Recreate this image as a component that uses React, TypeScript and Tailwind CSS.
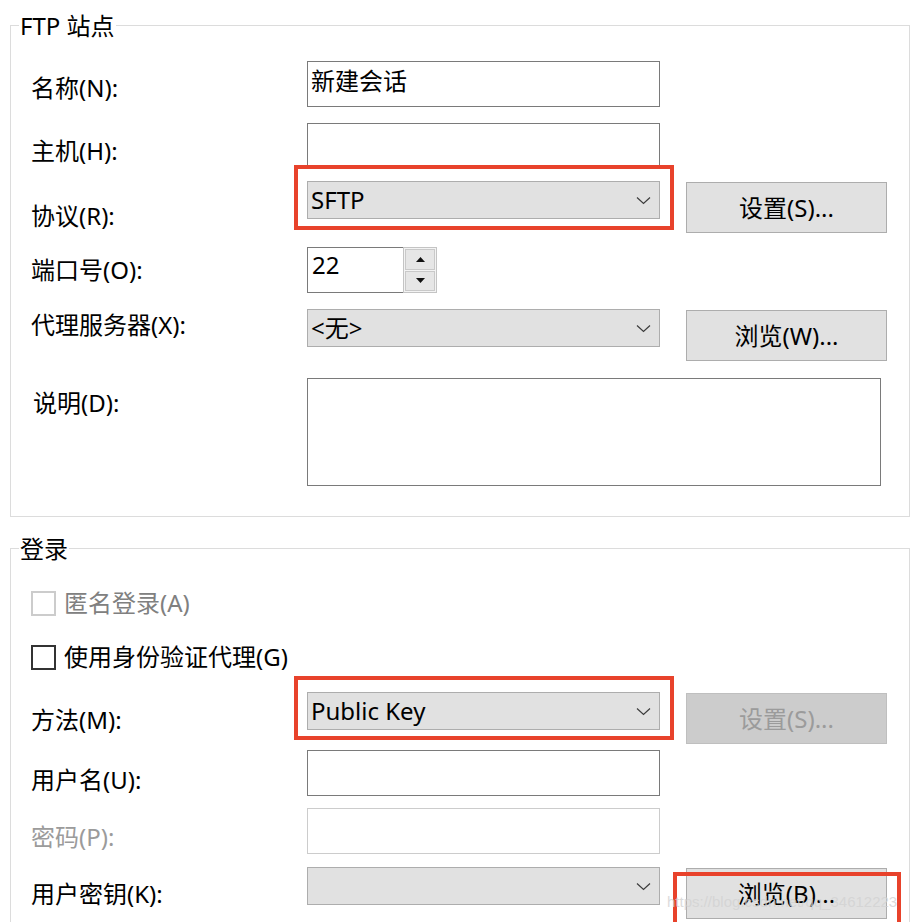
import React from 'react';

const LABEL_W = 'w-[276px]';

function Chevron() {
  return (
    <svg width="15" height="9" viewBox="0 0 15 9" className="shrink-0">
      <path d="M1 1.5 L7.5 7.5 L14 1.5" fill="none" stroke="#3c3c3c" strokeWidth="1.2" />
    </svg>
  );
}

function Select({ value }: { value?: string }) {
  return (
    <div className="w-[353px] h-[38px] shrink-0 bg-[#e1e1e1] border border-[#adadad] flex items-center justify-between pl-[3px] pr-[8px] leading-[28px]">
      <span>{value}</span>
      <Chevron />
    </div>
  );
}

function Button({ text, disabled }: { text: string; disabled?: boolean }) {
  return (
    <div
      className={`ml-[26px] mt-[1px] w-[201px] h-[51px] shrink-0 flex items-center justify-center leading-[28px] border ${
        disabled ? 'bg-[#cccccc] border-[#bfbfbf] text-[#9b9b9b]' : 'bg-[#e1e1e1] border-[#adadad]'
      }`}
    >
      {text}
    </div>
  );
}

function Input({ value, disabled }: { value?: string; disabled?: boolean }) {
  return (
    <div
      className={`w-[353px] h-[46px] shrink-0 bg-white border pl-[3px] pt-[5px] leading-[28px] ${
        disabled ? 'border-[#cccccc]' : 'border-[#7a7a7a]'
      }`}
    >
      {value}
    </div>
  );
}

function Label({ text, top, gray }: { text: string; top: string; gray?: boolean }) {
  return <div className={`${LABEL_W} shrink-0 leading-[28px] ${top} ${gray ? 'text-[#9b9b9b]' : ''}`}>{text}</div>;
}

function Spinner() {
  return (
    <div className="flex">
      <div className="w-[96px] h-[46px] border border-r-0 border-[#7a7a7a] pl-[4px] pt-[3px] leading-[28px]">22</div>
      <div className="w-[34px] h-[46px] border border-[#c4c4c4] bg-[#f3f3f3] flex flex-col gap-[1px] p-[1px]">
        <div className="flex-1 bg-[#e6e6e6] border border-[#c9c9c9] flex items-center justify-center">
          <svg width="9" height="5" viewBox="0 0 9 5"><path d="M0 5 L4.5 0 L9 5 Z" fill="#111" /></svg>
        </div>
        <div className="flex-1 bg-[#e6e6e6] border border-[#c9c9c9] flex items-center justify-center">
          <svg width="9" height="5" viewBox="0 0 9 5"><path d="M0 0 L9 0 L4.5 5 Z" fill="#111" /></svg>
        </div>
      </div>
    </div>
  );
}

function Checkbox({ text, disabled }: { text: string; disabled?: boolean }) {
  return (
    <div className={`flex items-center h-[28px] gap-[8px] ${disabled ? 'text-[#808080]' : ''}`}>
      <div className={`w-[25px] h-[25px] border-2 bg-white ${disabled ? 'border-[#cccccc]' : 'border-[#333333]'}`} />
      <span className="leading-[28px]">{text}</span>
    </div>
  );
}

function Legend({ text }: { text: string }) {
  return <div className="-mt-[14px] ml-[8px] px-[1px] w-fit h-[28px] leading-[28px] bg-white">{text}</div>;
}

export default function App() {
  return (
    <div className="relative w-[920px] h-[922px] overflow-hidden bg-white text-black text-[24px] font-['Noto_Sans','Noto_Sans_CJK_SC',sans-serif]">
      {/* FTP 站点 */}
      <div className="ml-[10px] mt-[25px] w-[900px] h-[492px] border border-[#dcdcdc]">
        <Legend text="FTP 站点" />
        <div className="pl-[20px] mt-[21px]">
          <div className="flex items-start h-[62px]">
            <Label text="名称(N):" top="mt-[13px]" />
            <Input value="新建会话" />
          </div>
          <div className="flex items-start h-[58px]">
            <Label text="主机(H):" top="mt-[14px]" />
            <Input />
          </div>
          <div className="flex items-start h-[66px]">
            <Label text="协议(R):" top="mt-[21px]" />
            <Select value="SFTP" />
            <Button text="设置(S)..." />
          </div>
          <div className="flex items-start h-[62px]">
            <Label text="端口号(O):" top="mt-[9px]" />
            <Spinner />
          </div>
          <div className="flex items-start h-[69px]">
            <Label text="代理服务器(X):" top="mt-[2px]" />
            <Select value="<无>" />
            <Button text="浏览(W)..." />
          </div>
          <div className="flex items-start">
            <div className={`${LABEL_W} shrink-0 leading-[28px] mt-[11px] pl-[2px]`}>说明(D):</div>
            <div className="w-[574px] h-[108px] border border-[#7a7a7a] bg-white" />
          </div>
        </div>
      </div>

      {/* 登录 */}
      <div className="ml-[10px] mt-[31px] w-[900px] h-[420px] border border-[#dcdcdc]">
        <Legend text="登录" />
        <div className="pl-[20px] mt-[26px]">
          <Checkbox text="匿名登录(A)" disabled />
          <div className="mt-[26px]">
            <Checkbox text="使用身份验证代理(G)" />
          </div>
          <div className="mt-[21px] flex items-start h-[58px]">
            <Label text="方法(M):" top="mt-[14px]" />
            <Select value="Public Key" />
            <Button text="设置(S)..." disabled />
          </div>
          <div className="flex items-start h-[58px]">
            <Label text="用户名(U):" top="mt-[16px]" />
            <Input />
          </div>
          <div className="flex items-start h-[59px]">
            <Label text="密码(P):" top="mt-[15px]" gray />
            <Input disabled />
          </div>
          <div className="flex items-start">
            <Label text="用户密钥(K):" top="mt-[13px]" />
            <Select />
            <Button text="浏览(B)..." />
          </div>
        </div>
      </div>

      {/* annotation boxes */}
      <div className="absolute left-[294px] top-[165px] w-[380px] h-[65px] border-4 border-[#e8422b]" />
      <div className="absolute left-[294px] top-[676px] w-[380px] h-[64px] border-4 border-[#e8422b]" />
      <div className="absolute left-[673px] top-[872px] w-[228px] h-[54px] border-4 border-[#e8422b]" />

      {/* watermark */}
      <div className="absolute left-[667px] top-[893px] text-[15px] leading-[18px] font-['Liberation_Sans',sans-serif] text-[#d2d2d2]/80 whitespace-nowrap">
        https://blog.csdn.net/qq_34612223
      </div>
    </div>
  );
}
